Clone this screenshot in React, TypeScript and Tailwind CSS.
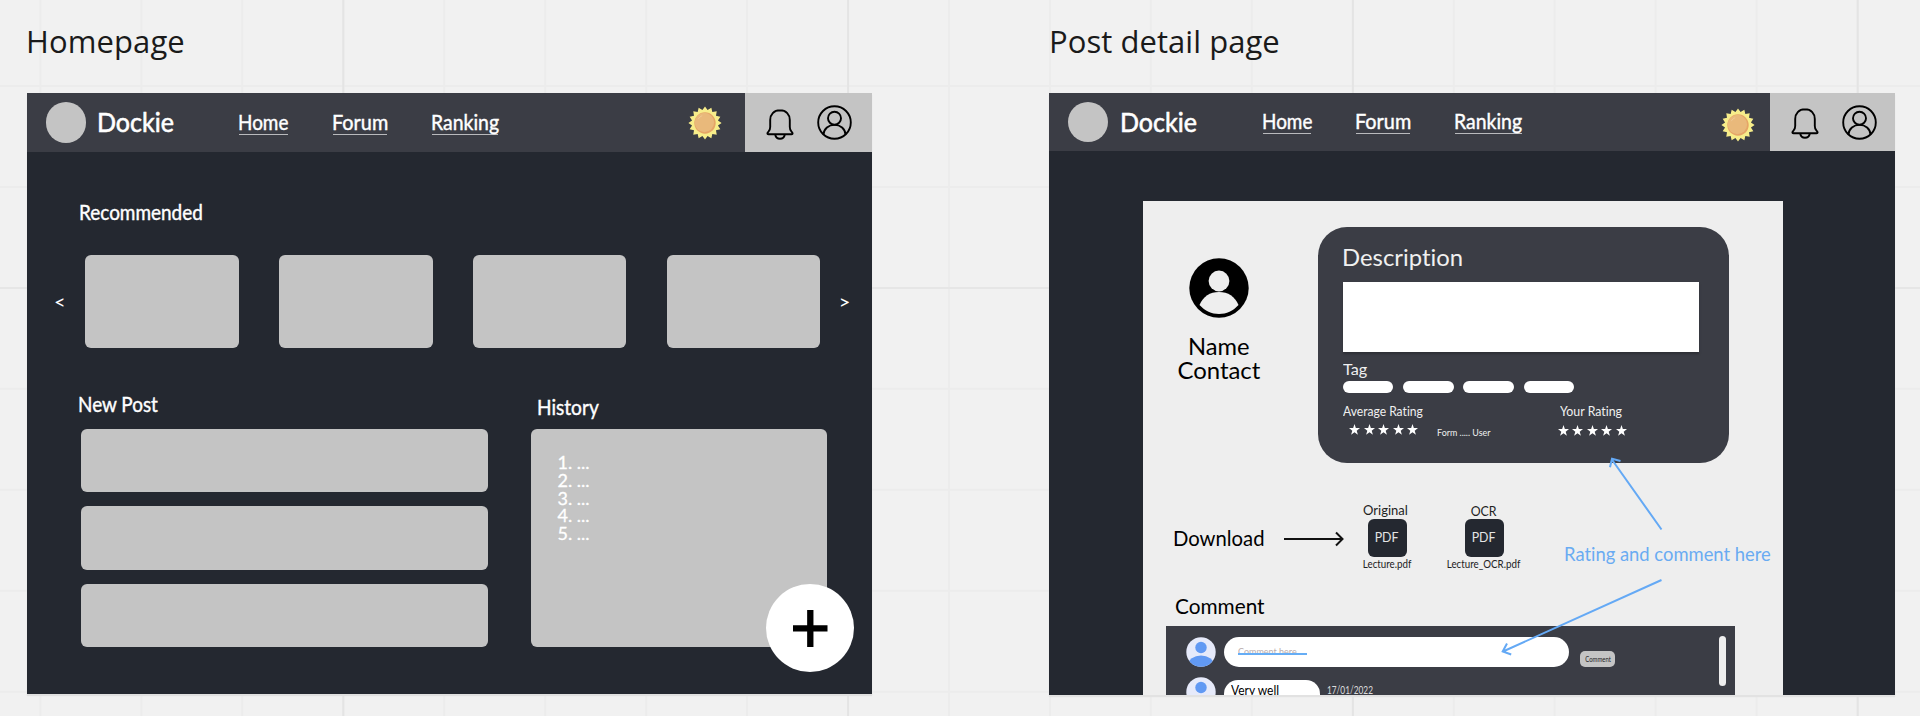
import React from "react";

const fit = "block w-max origin-left whitespace-nowrap ";

function Sun() {
  const pts = Array.from({ length: 32 }, (_, i) => {
    const r = i % 2 ? 13.2 : 16.6;
    const a = (i * Math.PI) / 16;
    return `${17 + r * Math.sin(a)},${17 - r * Math.cos(a)}`;
  }).join(" ");
  return (
    <svg width="34" height="34" viewBox="0 0 34 34" className="block">
      <polygon points={pts} fill="#f7ed8a" />
      <circle cx="17" cy="17" r="10.7" fill="#e6a567" />
      <circle cx="16.4" cy="16.5" r="9.7" fill="#e9b97b" />
      <path d="M10.2 13.2a8 8 0 0 1 4-3.6" stroke="#efc894" strokeWidth="1" fill="none" />
    </svg>
  );
}

function Bell() {
  return (
    <svg width="28" height="31" viewBox="0 0 28 31" fill="none" stroke="#000" strokeWidth="1.9" strokeLinejoin="round" className="block">
      <path d="M14 1.300C7.800 1.300 4.200 5.400 4.200 11v7c0 2.200-.5 3.400-1.700 4.600-.9.900-1.100 1.400-1.100 1.900 0 .7.400.8 1 .8h23.200c.6 0 1-.1 1-.8 0-.5-.2-1-1.100-1.900-1.200-1.200-1.700-2.400-1.700-4.600v-7c0-5.600-3.600-9.700-9.800-9.700Z" />
      <path d="M9.200 25.500c.5 2.800 2.300 4.300 4.800 4.300s4.300-1.500 4.800-4.300" />
    </svg>
  );
}

function UserOutline() {
  return (
    <svg width="35" height="35" viewBox="0 0 35 35" fill="none" stroke="#000" strokeWidth="1.9" className="block">
      <circle cx="17.500" cy="17.500" r="16.300" />
      <circle cx="17.500" cy="13.200" r="6.500" />
      <path d="M6.500 29.400C7 23.700 11.500 19.900 17.500 19.900s10.500 3.800 11 9.500" />
    </svg>
  );
}

function Header({ post }: { post?: boolean }) {
  const link = "h-[24px] border-b border-[#b9babd] text-[21px] leading-[22px] [-webkit-text-stroke:0.4px_white]";
  return (
    <header className={post ? "flex h-[58px] items-center bg-[#3b3d45] text-white" : "flex h-[59px] items-center bg-[#3b3d45] text-white"}>
      <div className="ml-[18.500px] size-[40.500px] shrink-0 rounded-full bg-[#c4c4c4]" />
      <div className={post ? "ml-[11.500px] w-[143.500px] shrink-0 pb-[1px]" : "ml-[10.500px] w-[142.800px] shrink-0 pb-[1px]"}>
        <span className={fit + "scale-x-[.91] text-[27.500px] leading-[34px] [-webkit-text-stroke:0.6px_white]"}>Dockie</span>
      </div>
      <div className={"w-[48.300px] shrink-0 " + link}><span className={fit + "-ml-[1px] scale-x-[.900]"}>Home</span></div>
      <div className={"ml-[45px] w-[54px] shrink-0 " + link}><span className={fit + "-ml-[1px] scale-x-[.945]"}>Forum</span></div>
      <div className={"ml-[45px] w-[66.500px] shrink-0 " + link}><span className={fit + "-ml-[1px] scale-x-[.925]"}>Ranking</span></div>
      <div className={post ? "ml-[199px] shrink-0 pt-[5px]" : "ml-[190px] shrink-0"}><Sun /></div>
      <div className="ml-auto flex h-full shrink-0 items-center bg-[#c4c4c4]">
        <div className="mt-[3px] ml-[21px]"><Bell /></div>
        <div className={post ? "mr-[18.500px] ml-[22.500px]" : "mr-[20px] ml-[22.500px]"}><UserOutline /></div>
      </div>
    </header>
  );
}

function HomePage() {
  const heading = "text-[21px] leading-[24px] [-webkit-text-stroke:0.4px_white] ";
  return (
    <section className="w-[844.500px] shrink-0">
      <h1 className="h-[93px] pt-[21px] font-['Open_Sans',sans-serif] text-[31px] leading-[40px] text-[#1a1a1a]"><span className="-ml-[1px] tracking-[0.1px]">Homepage</span></h1>
      <div className="relative h-[600.500px] bg-[#242830] text-white shadow-[0_2px_1px_#e0e0e0]">
        <Header />
        <div className="pt-[48px] pl-[51.500px]"><span className={fit + heading + "scale-x-[.902]"}>Recommended</span></div>
        <div className="mt-[31px] flex h-[92.500px] items-center text-[20px] leading-[20px]">
          <div className="w-[58.300px] shrink-0 pl-[27px]">&lt;</div>
          <div className="flex h-full shrink-0 gap-[40.500px]">
            {[0, 1, 2, 3].map((i) => <div key={i} className="h-full w-[153.400px] rounded-[6px] bg-[#c4c4c4]" />)}
          </div>
          <div className="pl-[18.500px]">&gt;</div>
        </div>
        <div className="mt-[44px] flex">
          <div className="ml-[53.500px] w-[407px]">
            <div className="h-[37.500px]"><span className={fit + heading + "-ml-[2.500px] scale-x-[.900]"}>New Post</span></div>
            <div className="flex flex-col gap-[14.200px]">
              {[0, 1, 2].map((i) => <div key={i} className="h-[63.300px] rounded-[6px] bg-[#c4c4c4]" />)}
            </div>
          </div>
          <div className="ml-[43.500px] w-[296px]">
            <div className="h-[37.500px] pt-[3px] pl-[5.500px]"><span className={fit + heading + "scale-x-[.910]"}>History</span></div>
            <div className="h-[218px] rounded-[6px] bg-[#c4c4c4] pt-[25px] pl-[26.500px] text-[18px] leading-[17.750px] [-webkit-text-stroke:0.3px_white]">
              {[1, 2, 3, 4, 5].map((n) => <div key={n}>{n}. ...</div>)}
            </div>
          </div>
        </div>
        <div className="absolute top-[490.700px] left-[738.700px] flex size-[88.700px] items-center justify-center rounded-full bg-white">
          <svg width="35" height="37" viewBox="0 0 35 37"><path d="M17.300 0v37M0 18.300h34.500" stroke="#000" strokeWidth="6.300" /></svg>
        </div>
      </div>
    </section>
  );
}

function Stars() {
  return (
    <div className="flex gap-[3.500px]">
      {[0, 1, 2, 3, 4].map((i) => (
        <svg key={i} width="11" height="11" viewBox="0 0 22 22"><polygon fill="#fff" points="11,0 13.700,8 22,8.200 15.400,13.300 17.800,21.300 11,16.500 4.200,21.300 6.600,13.300 0,8.200 8.300,8" /></svg>
      ))}
    </div>
  );
}

function FileTile({ label, name, low }: { label: string; name: string; low?: boolean }) {
  return (
    <div className="flex w-[80px] shrink-0 flex-col items-center text-[#222]">
      <div className={low ? "h-[16.500px] pt-[1.500px] text-[13px] leading-[14px]" : "h-[16.500px] pr-[3px] text-[13px] leading-[14px]"}>
        <span className={low ? "block scale-x-[.950]" : "block"}>{label}</span>
      </div>
      <div className="flex size-[39px] items-center justify-center rounded-[6px] bg-[#242830] pb-[1px] text-[13px] leading-[14px] text-[#e4e4e4]"><span className="block scale-x-[.950]">PDF</span></div>
      <div className="flex h-[13px] items-center justify-center pt-[1px] text-[10.500px] leading-[12px]"><span className="block scale-x-[.930] whitespace-nowrap">{name}</span></div>
    </div>
  );
}

function CommentAvatar() {
  return (
    <svg width="30" height="30" viewBox="0 0 30 30" className="block shrink-0">
      <defs><clipPath id="face"><circle cx="15" cy="15" r="14.700" /></clipPath></defs>
      <circle cx="15" cy="15" r="14.700" fill="#e6eafa" />
      <g clipPath="url(#face)" fill="#6199f3"><circle cx="15" cy="10.500" r="5.700" /><ellipse cx="15" cy="28" rx="13" ry="9.500" /></g>
    </svg>
  );
}

function PostPage() {
  return (
    <section className="ml-[177.500px] w-[846px] shrink-0">
      <h1 className="h-[93px] pt-[21px] font-['Open_Sans',sans-serif] text-[31px] leading-[40px] text-[#1a1a1a]"><span className="tracking-[0.050px]">Post detail page</span></h1>
      <div className="relative h-[601.500px] bg-[#242830] shadow-[0_2px_1px_#e2e2e2]">
        <div className="h-full overflow-hidden">
          <Header post />
          <div className="mt-[49.500px] ml-[94px] h-[494px] w-[639.500px] bg-[#eee]">
            <div className="flex h-[262px]">
              <div className="mr-[24px] flex w-[151.300px] flex-col items-center pt-[57px] text-[23px] leading-[24px] text-black">
                <svg width="60" height="60" viewBox="0 0 60 60" className="block">
                  <circle cx="30" cy="30" r="29.700" fill="#000" />
                  <circle cx="30" cy="23" r="10.400" fill="#eee" />
                  <path d="M10.500 47C14 38.500 21 34 30 34s16 4.500 19.500 13C44 53 37.500 56 30 56s-14-3-19.500-9Z" fill="#eee" />
                </svg>
                <div className="mt-[16px] scale-x-[1.030]">Name</div>
                <div className="scale-x-[1.040]">Contact</div>
              </div>
              <div className="mt-[26.500px] h-[235.500px] w-[410.300px] rounded-[29px] bg-[#3b3d45] pt-[16px] pl-[24.400px] text-[#f0f0f0]">
                <div className="h-[28px] text-[23.500px] leading-[28px]"><span className={fit + "-ml-[1px] scale-x-[1.015]"}>Description</span></div>
                <div className="mt-[11px] h-[69.500px] w-[356.600px] bg-white shadow-[0_2px_2px_#2e3036]" />
                <div className="mt-[9.500px] h-[16px] text-[15px] leading-[16px]"><span className={fit + "scale-x-[1.080]"}>Tag</span></div>
                <div className="mt-[4px] flex gap-[9.600px]">
                  {[0, 1, 2, 3].map((i) => <div key={i} className="h-[12.300px] w-[50.700px] rounded-full bg-white" />)}
                </div>
                <div className="mt-[10.400px] flex text-[13px] leading-[14px]">
                  <div className="w-[94.800px]">
                    <span className={fit + "scale-x-[.930]"}>Average Rating</span>
                    <div className="mt-[6px] ml-[6.500px]"><Stars /></div>
                  </div>
                  <div className="w-[122.500px] pt-[23px] text-[9px] leading-[12px]"><span className={fit + "scale-x-[.990]"}>Form ..... User</span></div>
                  <div>
                    <span className={fit + "scale-x-[.950]"}>Your Rating</span>
                    <div className="mt-[7.500px] -ml-[2px]"><Stars /></div>
                  </div>
                </div>
              </div>
            </div>
            <div className="mt-[40px] flex h-[67.500px]">
              <div className="ml-[30px] w-[111px] shrink-0 pt-[23px] text-[21px] leading-[24px] text-black"><span className={fit + "scale-x-[.965]"}>Download</span></div>
              <svg width="63" height="16" viewBox="0 0 63 16" className="mt-[28.500px] shrink-0" fill="none" stroke="#111" strokeWidth="2"><path d="M0 8h58.500M52 1.500 58.500 8l-6.500 6.500" /></svg>
              <FileTile label="Original" name="Lecture.pdf" />
              <div className="w-[17px] shrink-0" />
              <FileTile low label="OCR" name="Lecture_OCR.pdf" />
              <div className="ml-[40px] w-[207px] shrink-0 pt-[40px] text-[19px] leading-[22px] text-[#69abf2]"><span className={fit + "scale-x-[.968]"}>Rating and comment here</span></div>
            </div>
            <div className="mt-[23px] ml-[31.500px] h-[26px] text-[22px] leading-[26px] text-black"><span className={fit + "scale-x-[.945]"}>Comment</span></div>
            <div className="mt-[7px] ml-[22.500px] h-[69px] w-[569.200px] bg-[#3b3d45]">
              <div className="flex h-full">
                <div className="w-[414.500px] shrink-0 pt-[10.500px] pl-[20px]">
                  <div className="flex">
                    <CommentAvatar />
                    <div className="ml-[8.500px] h-[30px] w-[345.300px] rounded-full bg-white pt-[9px] pl-[13.500px] text-[10px] leading-[11px] text-[#b9acac]">
                      <div className="relative h-[12px] w-[69px]">
                        <span className={fit + "scale-x-[.900]"}>Comment here</span>
                        <div className="absolute top-[7.500px] left-0 h-[2px] w-[69px] bg-[#66adf5]" />
                      </div>
                    </div>
                  </div>
                  <div className="mt-[10.500px] flex">
                    <CommentAvatar />
                    <div className="mt-[3px] ml-[8.500px] h-[28px] w-[96px] rounded-[14px] bg-white pt-[3px] pl-[7px] text-[13.500px] leading-[14px] text-black"><span className={fit + "scale-x-[.890]"}>Very well</span></div>
                    <div className="mt-[7px] ml-[7px] text-[10.500px] leading-[12px] text-[#dcdcdc]"><span className={fit + "scale-x-[.790]"}>17/01/2022</span></div>
                  </div>
                </div>
                <div className="mt-[24.500px] flex h-[16px] w-[35.300px] shrink-0 items-center justify-center rounded-[5px] bg-[#c4c4c4] text-[7px] leading-[8px] text-[#222]"><span className="block scale-x-[.850]">Comment</span></div>
                <div className="mt-[9.500px] ml-[103.500px] h-[50.500px] w-[7px] rounded-full bg-[#eee]" />
              </div>
            </div>
          </div>
        </div>
        <svg className="absolute top-[357px] left-[441px]" width="180" height="210" viewBox="1490 450 180 210" fill="none" stroke="#64a9f5" strokeWidth="2">
          <path d="M1661.500 529.500 1611.500 459M1620.500 461l-8.500-2.300-2 8.500" />
          <path d="M1661.500 580 1503 651.500M1507 643.500l-4.300 8 8.500 3" />
        </svg>
      </div>
    </section>
  );
}

export default function App() {
  return (
    <main className="flex h-[716px] w-[1920px] overflow-hidden bg-[#f1f1f1] bg-[linear-gradient(to_right,#e4e4e4_2px,transparent_2px),linear-gradient(to_bottom,#e6e6e6_2px,transparent_2px),linear-gradient(to_right,#ececec_2px,transparent_2px),linear-gradient(to_bottom,#ececec_2px,transparent_2px)] [background-size:504.800px_504.800px,504.800px_504.800px,100.960px_100.960px,100.960px_100.960px] [background-position:342.300px_0,0_287px,39.400px_0,0_85px] pl-[27px] font-['Lato',sans-serif] [font-variant-ligatures:none]">
      <HomePage />
      <PostPage />
    </main>
  );
}
